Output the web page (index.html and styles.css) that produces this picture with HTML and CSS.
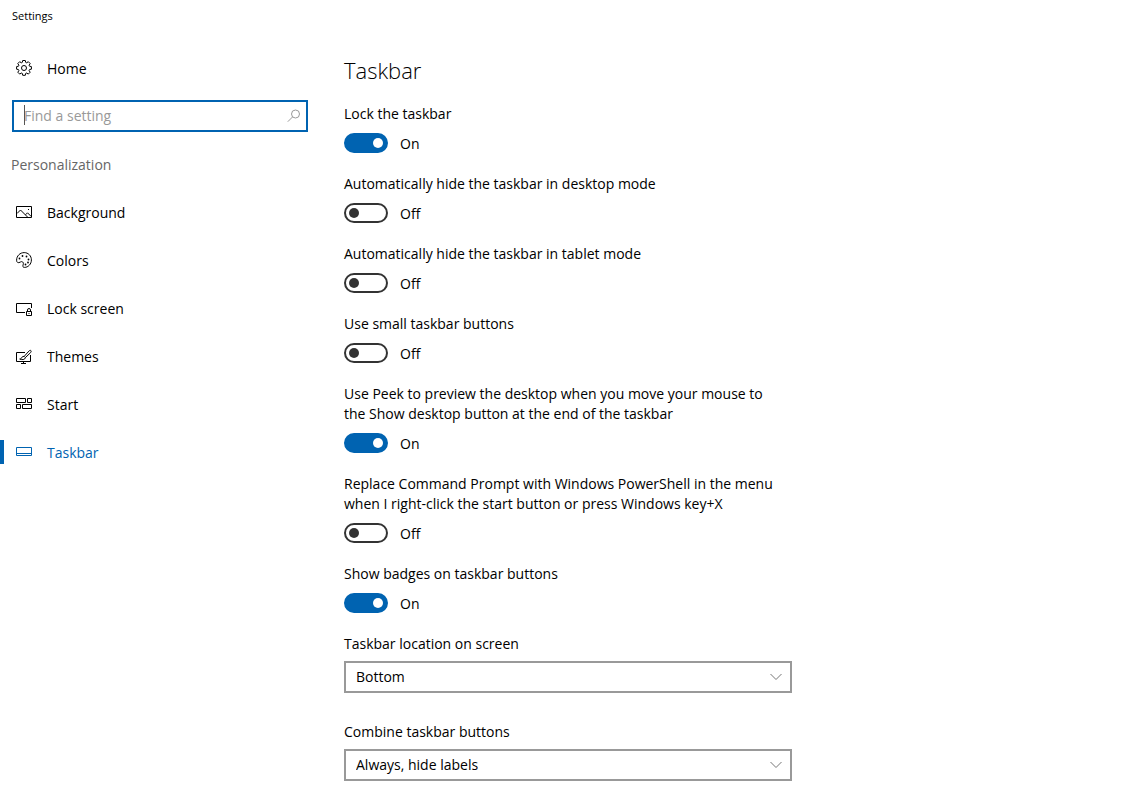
FILE: index.html
```html
<!DOCTYPE html>
<html lang="en">
<head>
  <meta charset="UTF-8" />
  <meta name="viewport" content="width=device-width, initial-scale=1.0"/>
  <title>Settings</title>
  <link rel="stylesheet" href="styles.css">
</head>
<body>

  <header class="titlebar">Settings</header>

  <div class="layout">
    <aside class="sidebar">
      <a class="nav-item" href="#home">
        <svg class="icon" viewBox="0 0 16 16">
          <path d="M6.700.5h2.600l.4 1.900 1 .4 1.600-1.100 1.900 1.900-1.100 1.600.4 1 1.900.4v2.600l-1.900.4-.4 1 1.100 1.600-1.900 1.900-1.600-1.100-1 .4-.4 1.900H6.700l-.4-1.900-1-.4-1.600 1.100-1.900-1.900 1.100-1.600-.4-1L.6 9.200V6.600l1.900-.4.4-1L1.800 3.600l1.900-1.900 1.600 1.100 1-.4z"/>
          <circle cx="8" cy="8" r="2.500"/>
        </svg>
        <span>Home</span>
      </a>

      <div class="search">
        <input type="text" id="search" placeholder="Find a setting" aria-label="Find a setting" />
        <span class="caret"></span>
        <svg class="search-icon" viewBox="0 0 14 14">
          <circle cx="8.500" cy="5" r="4"/>
          <path d="M5.600 7.900L.8 12.700"/>
        </svg>
      </div>

      <h2>Personalization</h2>

      <nav>
        <a class="nav-item" href="#background">
          <svg class="icon" viewBox="0 0 16 16">
            <path d="M.5 2.500h15v11H.5z"/>
            <path d="M1 9.500l3.500-3.500 7 7M9.500 10.800l2-2 3.800 3.800"/>
            <path class="fill" d="M12 5h1v1h-1z"/>
          </svg>
          <span>Background</span>
        </a>
        <a class="nav-item" href="#colors">
          <svg class="icon" viewBox="0 0 16 16">
            <path d="M.6 8.200C.6 3.900 4 .6 8.200.6c4.100 0 7.200 3.300 7.200 7.300 0 4.200-3.200 7.500-6.900 7.500-1.600 0-1.900-1-1.500-2.200.5-1.500.6-2.400-.3-3.200-1-.8-1.700-.3-2.600.2-1.900 1-3.500.4-3.500-2z"/>
            <g class="fill">
              <circle cx="3.500" cy="6.500" r=".9"/>
              <circle cx="6.500" cy="4" r=".9"/>
              <circle cx="10.500" cy="4.500" r=".9"/>
              <circle cx="12.500" cy="7.500" r=".9"/>
              <circle cx="12" cy="10.500" r=".9"/>
              <circle cx="9.500" cy="12.500" r=".9"/>
            </g>
          </svg>
          <span>Colors</span>
        </a>
        <a class="nav-item" href="#lock-screen">
          <svg class="icon" viewBox="0 0 16 16">
            <path d="M9 12.500H.5v-9h15V8"/>
            <path d="M10.500 11.500h5v4h-5zM11.500 11.500V10a1.500 1.500 0 0 1 3 0v1.500"/>
            <path class="fill" d="M12.500 13h1v1h-1z"/>
          </svg>
          <span>Lock screen</span>
        </a>
        <a class="nav-item" href="#themes">
          <svg class="icon" viewBox="0 0 16 16">
            <path d="M9 4.500H.5v9h14V7M7.500 13.500v2M5 15.500h5"/>
            <path d="M14.900 2.600c-.6-.6-1.400-.1-2 .5L8.200 8.400l1.200 1.200 5.200-5c.5-.6.800-1.400.3-2zM8.200 8.400c-2-.3-2.400 1.100-2.800 1.900-.4.5-1.100.6-1.700.7 1.900 1 5.400 1 5.700-1.400"/>
          </svg>
          <span>Themes</span>
        </a>
        <a class="nav-item" href="#start">
          <svg class="icon" viewBox="0 0 16 16">
            <path d="M.5 2.500h9v4h-9zM11.500 2.500h4v4h-4zM.5 8.500h4v4h-4zM6.500 8.500h9v4h-9z"/>
          </svg>
          <span>Start</span>
        </a>
        <a class="nav-item active" href="#taskbar">
          <svg class="icon" viewBox="0 0 16 16">
            <path d="M.5 3.500h15v8H.5zM.5 9.500h15"/>
          </svg>
          <span>Taskbar</span>
        </a>
      </nav>
    </aside>

    <main>
      <h1>Taskbar</h1>

      <div class="setting">
        <label for="lock">Lock the taskbar</label>
        <div class="toggle">
          <input type="checkbox" id="lock" checked />
          <span>On</span>
        </div>
      </div>

      <div class="setting">
        <label for="hide-desktop">Automatically hide the taskbar in desktop mode</label>
        <div class="toggle">
          <input type="checkbox" id="hide-desktop" />
          <span>Off</span>
        </div>
      </div>

      <div class="setting">
        <label for="hide-tablet">Automatically hide the taskbar in tablet mode</label>
        <div class="toggle">
          <input type="checkbox" id="hide-tablet" />
          <span>Off</span>
        </div>
      </div>

      <div class="setting">
        <label for="small-buttons">Use small taskbar buttons</label>
        <div class="toggle">
          <input type="checkbox" id="small-buttons" />
          <span>Off</span>
        </div>
      </div>

      <div class="setting">
        <label for="peek">Use Peek to preview the desktop when you move your mouse to the Show desktop button at the end of the taskbar</label>
        <div class="toggle">
          <input type="checkbox" id="peek" checked />
          <span>On</span>
        </div>
      </div>

      <div class="setting">
        <label for="powershell">Replace Command Prompt with Windows PowerShell in the menu when I right-click the start button or press Windows key+X</label>
        <div class="toggle">
          <input type="checkbox" id="powershell" />
          <span>Off</span>
        </div>
      </div>

      <div class="setting">
        <label for="badges">Show badges on taskbar buttons</label>
        <div class="toggle">
          <input type="checkbox" id="badges" checked />
          <span>On</span>
        </div>
      </div>

      <div class="setting select-setting">
        <label for="location">Taskbar location on screen</label>
        <div class="select">
          <select id="location">
            <option>Left</option>
            <option>Top</option>
            <option>Right</option>
            <option selected>Bottom</option>
          </select>
          <svg class="chevron" viewBox="0 0 12 8"><path d="M.5 1L6 6.500 11.500 1"/></svg>
        </div>
      </div>

      <div class="setting select-setting">
        <label for="combine">Combine taskbar buttons</label>
        <div class="select">
          <select id="combine">
            <option selected>Always, hide labels</option>
            <option>When taskbar is full</option>
            <option>Never</option>
          </select>
          <svg class="chevron" viewBox="0 0 12 8"><path d="M.5 1L6 6.500 11.500 1"/></svg>
        </div>
      </div>
    </main>
  </div>

  <script>
    document.querySelectorAll('.toggle input').forEach(input => {
      input.addEventListener('change', () => {
        input.nextElementSibling.textContent = input.checked ? 'On' : 'Off';
      });
    });
  </script>
</body>
</html>
```
FILE: styles.css
```css
* {
  box-sizing: border-box;
}

body {
  margin: 0;
  font-family: 'Open Sans', 'Noto Sans', sans-serif;
  font-size: 14px;
  line-height: 20px;
  color: #000;
  background-color: #fff;
}

.titlebar {
  padding: 0 12px;
  font-size: 11px;
  line-height: 32px;
}

.layout {
  display: flex;
  gap: 24px;
}

/* Sidebar */
.sidebar {
  flex: 0 0 320px;
  padding-top: 12px;
}

.nav-item {
  display: flex;
  align-items: center;
  gap: 15px;
  height: 48px;
  padding-left: 16px;
  color: #000;
  text-decoration: none;
}

.nav-item span,
.toggle span {
  padding-top: 2px;
}

.icon {
  width: 16px;
  height: 16px;
}

svg {
  fill: none;
  stroke: currentColor;
  stroke-width: 1;
}

svg .fill {
  fill: currentColor;
  stroke: none;
}

.nav-item.active {
  padding-left: 12px;
  color: #0063b1;
}

.nav-item.active::before {
  content: "";
  width: 4px;
  height: 24px;
  margin-left: -12px;
  margin-right: -3px;
  background-color: #0063b1;
}

.search {
  position: relative;
  margin: 8px 12px;
}

.search input {
  display: block;
  width: 100%;
  height: 32px;
  padding: 0 32px 2px 10px;
  font: inherit;
  border: 2px solid #0063b1;
  border-radius: 0;
  outline: none;
}

.search input::placeholder {
  color: #999;
}

.caret {
  position: absolute;
  top: 5px;
  left: 12px;
  width: 1px;
  height: 20px;
  background-color: #555;
}

.search input:focus + .caret {
  display: none;
}

.search-icon {
  position: absolute;
  top: 9px;
  right: 7px;
  width: 14px;
  height: 14px;
  color: #999;
}

h2 {
  margin: 0;
  padding: 15px 11px 13px;
  font-size: 14px;
  font-weight: 400;
  line-height: 20px;
  color: #666;
}

/* Settings list */
main {
  flex: 0 1 448px;
  min-width: 0;
  padding: 22px 0;
}

h1 {
  margin: 0 0 18px;
  font-size: 22px;
  font-weight: 300;
  line-height: 32px;
}

.setting {
  margin-bottom: 21px;
}

.setting label {
  display: block;
  margin-bottom: 9px;
  padding-right: 12px;
}

.toggle {
  display: flex;
  align-items: center;
  gap: 12px;
  height: 20px;
}

.toggle input {
  appearance: none;
  display: flex;
  align-items: center;
  width: 44px;
  height: 20px;
  margin: 0;
  padding: 0 3px;
  border: 2px solid #333;
  border-radius: 10px;
}

.toggle input::before {
  content: "";
  width: 10px;
  height: 10px;
  border-radius: 50%;
  background-color: #333;
}

.toggle input:checked {
  justify-content: flex-end;
  border-color: #0063b1;
  background-color: #0063b1;
}

.toggle input:checked::before {
  background-color: #fff;
}

.select-setting {
  margin-bottom: 29px;
}

.select-setting label {
  margin-bottom: 7px;
}

.select-setting:last-child {
  margin-bottom: 0;
}

.select {
  position: relative;
}

.select select {
  appearance: none;
  display: block;
  width: 100%;
  height: 32px;
  padding: 0 32px 0 10px;
  font: inherit;
  color: #000;
  background-color: #fff;
  border: 2px solid #999;
  border-radius: 0;
}

.chevron {
  position: absolute;
  top: 12px;
  right: 10px;
  width: 12px;
  height: 8px;
  color: #777;
  pointer-events: none;
}
```
